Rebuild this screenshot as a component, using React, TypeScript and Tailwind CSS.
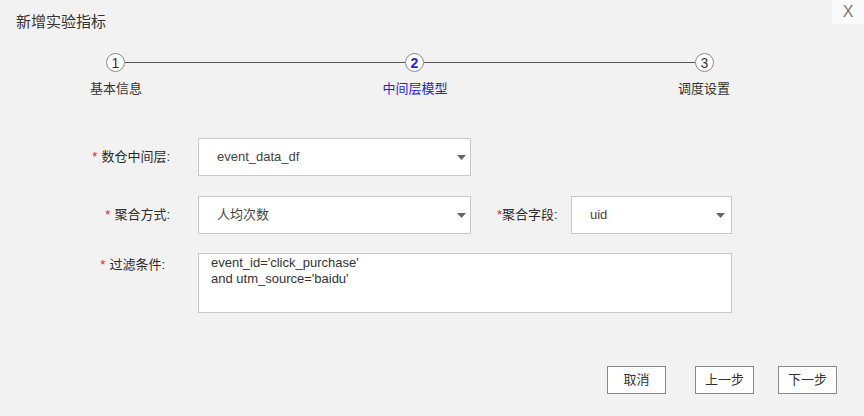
import React from "react";

const font = { fontFamily: '"Liberation Sans", "Noto Sans CJK SC", sans-serif' };

function Arrow() {
  return (
    <svg width="9" height="5" viewBox="0 0 9 5" className="shrink-0">
      <polygon points="0,0 9,0 4.5,5" fill="#666" />
    </svg>
  );
}

function Circle({ n, active }: { n: number; active?: boolean }) {
  return (
    <div
      className={`w-[19px] h-[19px] rounded-full border border-[#8a8a8a] bg-white flex items-center justify-center text-[14px] leading-none shrink-0 ${
        active ? "text-[#2323e6] font-bold" : "text-[#333]"
      }`}
    >
      {n}
    </div>
  );
}

function Req() {
  return <span className="text-[#d9232d] mr-[4px]">*</span>;
}

export default function App() {
  return (
    <div className="w-[864px] h-[416px] bg-[#f2f2f2] relative overflow-hidden" style={font}>
      <div className="absolute top-0 right-0 w-[32px] h-[24px] bg-[#fafafa] flex items-center justify-center text-[16px] text-[#777]">
        X
      </div>

      <div className="pl-[16px] pt-[12px] text-[15px] leading-[20px] text-[#333]">新增实验指标</div>

      {/* stepper */}
      <div className="mt-[21px] flex items-center pl-[106px]">
        <Circle n={1} />
        <div className="w-[280px] h-px bg-[#555]" />
        <Circle n={2} active />
        <div className="w-[271px] h-px bg-[#555]" />
        <Circle n={3} />
      </div>
      <div className="mt-[8px] flex text-[13px] leading-[18px]">
        <div className="ml-[66px] w-[100px] text-center text-[#333]">基本信息</div>
        <div className="ml-[199px] w-[100px] text-center text-[#2323e6]">中间层模型</div>
        <div className="ml-[189px] w-[100px] text-center text-[#333]">调度设置</div>
      </div>

      {/* form */}
      <div className="mt-[40px] flex flex-col text-[13px] text-[#2a2a2a]">
        <div className="flex items-center h-[38px]">
          <div className="w-[170px] text-right">
            <Req />
            数仓中间层:
          </div>
          <div className="ml-[28px] w-[273px] h-[38px] bg-white border border-[#c9c9c9] flex items-center justify-between pl-[18px] pr-[4px] text-[#444]">
            <span>event_data_df</span>
            <Arrow />
          </div>
        </div>

        <div className="mt-[20px] flex items-center h-[38px]">
          <div className="w-[170px] text-right">
            <Req />
            聚合方式:
          </div>
          <div className="ml-[28px] w-[273px] h-[38px] bg-white border border-[#c9c9c9] flex items-center justify-between pl-[18px] pr-[4px] text-[#444]">
            <span>人均次数</span>
            <Arrow />
          </div>
          <div className="ml-[26px] w-[74px]">
            <span className="text-[#d9232d]">*</span>聚合字段:
          </div>
          <div className="w-[161px] h-[38px] bg-white border border-[#c9c9c9] flex items-center justify-between pl-[18px] pr-[6px] text-[#444]">
            <span>uid</span>
            <Arrow />
          </div>
        </div>

        <div className="mt-[19px] flex items-start">
          <div className="w-[165px] text-right pt-[3px] leading-[18px]">
            <Req />
            过滤条件:
          </div>
          <div className="ml-[33px] w-[534px] h-[60px] bg-white border border-[#c9c9c9] pl-[12px] pt-[1px] text-[13px] leading-[16px] text-[#333]">
            <div>event_id='click_purchase'</div>
            <div>and utm_source='baidu'</div>
          </div>
        </div>
      </div>

      {/* buttons */}
      <div className="mt-[53px] flex justify-end pr-[27px] text-[13px] text-[#333]">
        <button className="w-[59px] h-[28px] bg-white border border-[#8a8a8a] flex items-center justify-center">取消</button>
        <button className="ml-[29px] w-[59px] h-[28px] bg-white border border-[#8a8a8a] flex items-center justify-center">上一步</button>
        <button className="ml-[24px] w-[59px] h-[28px] bg-white border border-[#8a8a8a] flex items-center justify-center">下一步</button>
      </div>
    </div>
  );
}
